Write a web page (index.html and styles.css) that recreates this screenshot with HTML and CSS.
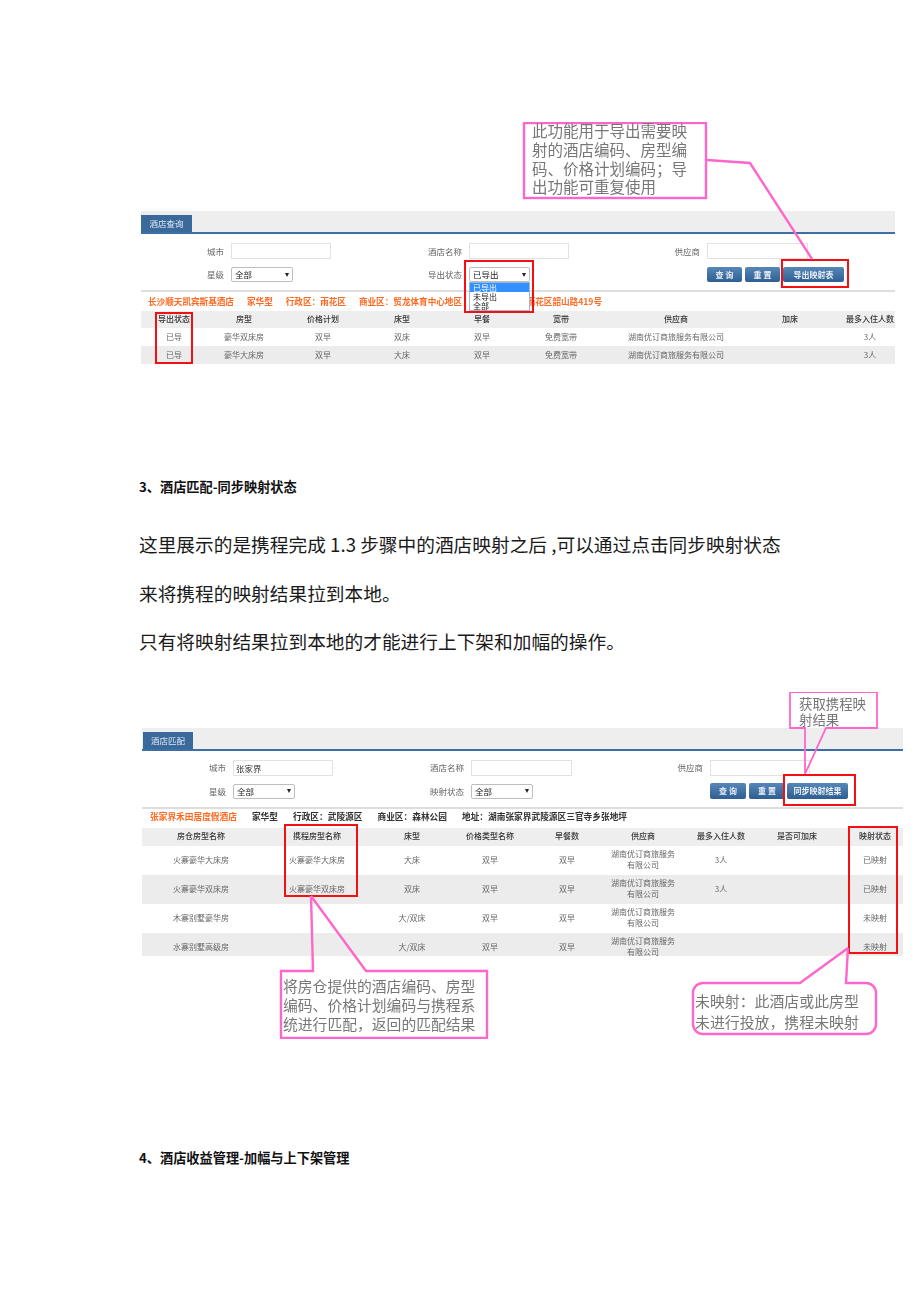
FILE: index.html
```html
<!DOCTYPE html>
<html lang="zh-CN">
<head>
<meta charset="utf-8">
<title>酒店匹配</title>
<link rel="stylesheet" href="styles.css">
</head>
<body>
<main class="page">
  <figure class="figure figure-export">
    <div class="panel">
      <div class="tabbar"><span class="tab">酒店查询</span></div>
      <div class="filters">
        <label class="label">城市</label><span class="input"></span>
        <label class="label">酒店名称</label><span class="input"></span>
        <label class="label">供应商</label><span class="input"></span>
        <label class="label">星级</label><span class="select"><span>全部</span><i class="caret"></i></span>
        <label class="label">导出状态</label>
        <span class="select select-open"><span>已导出</span><i class="caret"></i>
          <span class="menu"><span class="option option-active">已导出</span><span class="option">未导出</span><span class="option">全部</span></span>
        </span>
        <span class="spacer"></span>
        <span class="actions"><span class="btn btn-sm">查 询</span><span class="btn btn-sm">重 置</span><span class="btn btn-wide">导出映射表</span></span>
      </div>
      <div class="hotel">
        <span>长沙顺天凯宾斯基酒店</span><span>家华型</span><span>行政区：雨花区</span><span>商业区：贸龙体育中心地区</span><span>地址：长沙市雨花区韶山路419号</span>
      </div>
      <table class="grid grid-export">
        <colgroup><col class="a1"><col class="a2"><col class="a3"><col class="a4"><col class="a5"><col class="a6"><col class="a7"><col class="a8"><col class="a9"></colgroup>
        <thead><tr><th>导出状态</th><th>房型</th><th>价格计划</th><th>床型</th><th>早餐</th><th>宽带</th><th>供应商</th><th>加床</th><th class="last">最多入住人数</th></tr></thead>
        <tbody>
          <tr><td>已导</td><td>豪华双床房</td><td>双早</td><td>双床</td><td>双早</td><td>免费宽带</td><td>湖南优订商旅服务有限公司</td><td></td><td class="last">3人</td></tr>
          <tr><td>已导</td><td>豪华大床房</td><td>双早</td><td>大床</td><td>双早</td><td>免费宽带</td><td>湖南优订商旅服务有限公司</td><td></td><td class="last">3人</td></tr>
        </tbody>
      </table>
    </div>
    <div class="redbox rb-status"></div>
    <div class="redbox rb-dropdown"></div>
    <div class="redbox rb-export"></div>
    <svg class="overlay" width="754" height="242" viewBox="141 122 754 242" aria-hidden="true">
      <rect class="pink" x="524" y="123" width="182" height="75"/>
      <polyline class="pink" points="707,160 750,163 812,259"/>
    </svg>
    <p class="note note-export">此功能用于导出需要映<br>射的酒店编码、房型编<br>码、价格计划编码；导<br>出功能可重复使用</p>
  </figure>

  <h2 class="heading heading-first">3、酒店匹配-同步映射状态</h2>
  <p class="body-text">这里展示的是携程完成 1.3 步骤中的酒店映射之后 ,可以通过点击同步映射状态<br>来将携程的映射结果拉到本地。<br>只有将映射结果拉到本地的才能进行上下架和加幅的操作。</p>

  <figure class="figure figure-match">
    <div class="panel">
      <div class="tabbar"><span class="tab">酒店匹配</span></div>
      <div class="filters">
        <label class="label">城市</label><span class="input">张家界</span>
        <label class="label">酒店名称</label><span class="input"></span>
        <label class="label">供应商</label><span class="input"></span>
        <label class="label">星级</label><span class="select"><span>全部</span><i class="caret"></i></span>
        <label class="label">映射状态</label><span class="select"><span>全部</span><i class="caret"></i></span>
        <span class="spacer"></span>
        <span class="actions"><span class="btn btn-sm">查 询</span><span class="btn btn-sm">重 置</span><span class="btn btn-wide">同步映射结果</span></span>
      </div>
      <div class="hotel">
        <span>张家界禾田居度假酒店</span><span class="dark">家华型</span><span class="dark">行政区：武陵源区</span><span class="dark">商业区：森林公园</span><span class="dark">地址：湖南张家界武陵源区三官寺乡张地坪</span>
      </div>
      <table class="grid grid-match">
        <colgroup><col class="b1"><col class="b2"><col class="b3"><col class="b4"><col class="b5"><col class="b6"><col class="b7"><col class="b8"><col class="b9"></colgroup>
        <thead><tr><th>房仓房型名称</th><th>携程房型名称</th><th>床型</th><th>价格类型名称</th><th>早餐数</th><th>供应商</th><th>最多入住人数</th><th>是否可加床</th><th class="last">映射状态</th></tr></thead>
        <tbody>
          <tr><td>火寨豪华大床房</td><td>火寨豪华大床房</td><td>大床</td><td>双早</td><td>双早</td><td>湖南优订商旅服务<br>有限公司</td><td>3人</td><td></td><td class="last">已映射</td></tr>
          <tr><td>火寨豪华双床房</td><td>火寨豪华双床房</td><td>双床</td><td>双早</td><td>双早</td><td>湖南优订商旅服务<br>有限公司</td><td>3人</td><td></td><td class="last">已映射</td></tr>
          <tr><td>木寨别墅豪华房</td><td></td><td>大/双床</td><td>双早</td><td>双早</td><td>湖南优订商旅服务<br>有限公司</td><td></td><td></td><td class="last">未映射</td></tr>
          <tr><td>水寨别墅高级房</td><td></td><td>大/双床</td><td>双早</td><td>双早</td><td>湖南优订商旅服务<br>有限公司</td><td></td><td></td><td class="last">未映射</td></tr>
        </tbody>
      </table>
    </div>
    <div class="redbox rb-name"></div>
    <div class="redbox rb-state"></div>
    <div class="redbox rb-sync"></div>
    <svg class="overlay" width="762" height="347" viewBox="141 692 762 347" aria-hidden="true">
      <path class="pink thin" d="M805 774 V728 H790 V692 H877 V728 H826 L805 774"/>
      <path class="pink" d="M311 896 L313 971 H281 V1038 H487 V971 H366 L311 896"/>
      <path class="pink" d="M848 948 L800 983 H703 A10 10 0 0 0 693 993 V1024 A10 10 0 0 0 703 1034 H866 A10 10 0 0 0 876 1024 V993 A10 10 0 0 0 866 983 H846 L848 948"/>
    </svg>
    <p class="note note-fetch">获取携程映<br>射结果</p>
    <p class="note note-result">将房仓提供的酒店编码、房型<br>编码、价格计划编码与携程系<br>统进行匹配，返回的匹配结果</p>
    <p class="note note-unmapped">未映射：此酒店或此房型<br>未进行投放，携程未映射</p>
  </figure>

  <h2 class="heading heading-second">4、酒店收益管理-加幅与上下架管理</h2>
</main>
</body>
</html>
```
FILE: styles.css
```css
* { box-sizing: border-box; }
html, body { margin: 0; padding: 0; background: #fff; }
body { font-family: "Noto Sans CJK SC", "Liberation Sans", sans-serif; color: #111; }
.page { height: 1302px; overflow: hidden; padding: 122px 0 0 141px; }

.figure { position: relative; margin: 0; }
.figure-export { width: 754px; padding-top: 89px; }
.figure-match { width: 762px; height: 347px; margin-top: 26px; padding: 36px 0 0 1px; }

.panel { font-size: 8px; line-height: 10px; filter: blur(.45px); color: #666; }
.figure-match .panel { height: 228px; overflow: hidden; }
.tabbar { height: 23px; padding-top: 4px; background: #eeeeee; border-bottom: 2px solid #3b6fa5; }
.tab { display: block; width: 51px; height: 17px; background: #3a6a9c; color: #dfe8f2; font-size: 8.5px; line-height: 17px; text-align: center; }
.figure-match .tab { margin-left: 1px; width: 50px; }

.filters { display: grid; height: 58px; padding-top: 9px; border-bottom: 2px solid #dedede; grid-template-columns: 90px 100px 138px 100px 138px 101px; grid-template-rows: 16px 15px; row-gap: 8px; align-items: center; }
.figure-match .filters { grid-template-columns: 91px 100px 138px 101px 138px 100px; }
.label { text-align: right; padding: 0 7px 1px 0; color: #666; font-size: 8.5px; }
.input { height: 16px; border: 1px solid #e2e2e2; background: #fff; padding-left: 2px; line-height: 14px; font-size: 8.5px; color: #333; }
.select { position: relative; width: 62px; height: 15px; border: 1px solid #bdbdbd; border-radius: 2px; background: #fff; padding: 0 3px; line-height: 13px; font-size: 8.5px; color: #222; display: flex; justify-content: space-between; align-items: center; }
.caret { width: 0; height: 0; border-left: 2.5px solid transparent; border-right: 2.5px solid transparent; border-top: 4px solid #222; }
.actions { display: flex; gap: 3px; align-items: center; white-space: nowrap; }
.btn { flex: none; height: 15px; border-radius: 2px; background: linear-gradient(#5687b8, #2f5f92); color: #e8eff7; font-size: 8px; font-weight: 700; line-height: 15px; text-align: center; }
.btn-sm { width: 35px; }
.btn-wide { width: 61px; }
.figure-match .actions { gap: 2px; }
.figure-match .btn { height: 16px; line-height: 16px; }
.figure-match .btn-sm { width: 36px; }
.figure-match .btn-sm + .btn-sm { margin-left: 1px; }

.menu { position: absolute; left: -1px; top: 14px; width: 61px; height: 29px; display: flex; flex-direction: column; border: 1px solid #9db8d8; background: #fff; z-index: 1; }
.option { flex: none; height: 9px; line-height: 9px; padding-left: 3px; font-size: 8px; color: #222; }
.option-active { background: #3390ff; color: #fff; }
.select-open { width: 61px; }

.hotel { display: flex; gap: 13px; height: 19px; padding: 0 0 2px 7px; align-items: center; font-size: 8.6px; font-weight: 700; color: #ff6a22; white-space: nowrap; }
.hotel .dark { color: #333; }
.figure-match .hotel { gap: 15px; padding-left: 8px; font-size: 8.7px; }

.grid { border-collapse: collapse; table-layout: fixed; width: 100%; }
.grid th, .grid td { padding: 0 0 2px; text-align: center; font-size: 8px; line-height: 11px; }
.grid th { height: 17px; background: #eeeeee; color: #333; font-weight: 500; }
.grid td { color: #666; }
.grid-export td { height: 18px; }
.grid-export tbody tr:nth-child(even) td,
.grid-match tbody tr:nth-child(even) td { background: #ececec; }
.grid-export .last { padding-left: 20px; white-space: nowrap; }
.grid-match .last { padding-left: 13px; white-space: nowrap; }
.grid-match th { height: 18px; }
.grid-match td { height: 29px; }

.a1 { width: 66px; } .a2 { width: 74px; } .a3 { width: 84px; } .a4 { width: 74px; } .a5 { width: 86px; } .a6 { width: 72px; } .a7 { width: 158px; } .a8 { width: 70px; } .a9 { width: 70px; }
.b1 { width: 118px; } .b2 { width: 114px; } .b3 { width: 76px; } .b4 { width: 80px; } .b5 { width: 74px; } .b6 { width: 78px; } .b7 { width: 78px; } .b8 { width: 74px; } .b9 { width: 69px; }

.redbox { position: absolute; border: 2px solid #f40f12; }
.rb-status { left: 14px; top: 190px; width: 38px; height: 52px; }
.rb-dropdown { left: 323px; top: 138px; width: 70px; height: 53px; }
.rb-export { left: 640px; top: 137px; width: 68px; height: 29px; }
.rb-name { left: 143px; top: 132px; width: 74px; height: 73px; }
.rb-state { left: 707px; top: 134px; width: 50px; height: 128px; }
.rb-sync { left: 642px; top: 82px; width: 73px; height: 32px; }

.overlay { position: absolute; left: 0; top: 0; filter: blur(.3px); }
.pink { fill: none; stroke: #ff66cc; stroke-width: 2.4; }
.pink.thin { stroke-width: 1.8; }

.note { position: absolute; margin: 0; color: #777; filter: blur(.3px); white-space: nowrap; }
.note-export { left: 391px; top: -1px; font-size: 15.5px; line-height: 18.8px; }
.note-fetch { left: 658px; top: 3px; font-size: 13.4px; line-height: 16px; }
.note-result { left: 142px; top: 284px; font-size: 14.8px; line-height: 19.4px; }
.note-unmapped { left: 554px; top: 298px; font-size: 14.9px; line-height: 21px; }

.heading { margin: 0 0 0 -2px; font-size: 13.2px; line-height: 20px; font-weight: 700; color: #111; white-space: nowrap; }
.heading-first { margin-top: 113px; }
.heading-second { margin-top: 109px; }
.body-text { margin: 23px 0 0 -2px; font-size: 18.7px; line-height: 48.5px; color: #1a1a1a; white-space: nowrap; }
```
